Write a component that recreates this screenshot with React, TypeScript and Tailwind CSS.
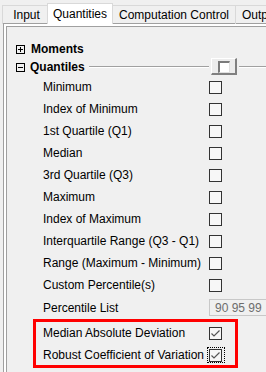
import React from "react";

const items = [
  "Minimum",
  "Index of Minimum",
  "1st Quartile (Q1)",
  "Median",
  "3rd Quartile (Q3)",
  "Maximum",
  "Index of Maximum",
  "Interquartile Range (Q3 - Q1)",
  "Range (Maximum - Minimum)",
  "Custom Percentile(s)",
];

const CheckBox = ({ checked = false }: { checked?: boolean }) => (
  <span className="block shrink-0 w-[13px] h-[13px] border border-[#333] bg-[#f7f7f7]">
    {checked && (
      <svg viewBox="0 0 11 11" className="w-[11px] h-[11px]">
        <polyline
          points="1.5,5.5 4,8 9.5,2.5"
          fill="none"
          stroke="#555"
          strokeWidth="1.2"
        />
      </svg>
    )}
  </span>
);

const Row = ({ label, children }: { label: string; children: React.ReactNode }) => (
  <div className="flex items-center h-[22px]">
    <span className="w-[166px] shrink-0 whitespace-nowrap">{label}</span>
    {children}
  </div>
);

const App = () => {
  return (
    <div className="w-[266px] h-[372px] bg-[#f0f0f0] overflow-hidden text-[12px] text-black font-['Liberation_Sans',Arial,sans-serif]">
      {/* tab strip */}
      <div className="flex items-end h-[24px] whitespace-nowrap">
        <div className="shrink-0 ml-[2px] w-[45px] h-[19px] flex items-center justify-center border-t border-l border-[#d9d9d9] pl-[3px]">
          Input
        </div>
        <div className="shrink-0 relative z-10 w-[66px] h-[21px] flex items-center justify-center bg-white border-t border-l border-r border-[#d9d9d9]">
          Quantities
        </div>
        <div className="shrink-0 w-[123px] h-[19px] flex items-center justify-center border-t border-r border-[#d9d9d9]">
          Computation Control
        </div>
        <div className="shrink-0 w-[60px] h-[19px] flex items-center pl-[6px] border-t border-[#d9d9d9]">
          Output
        </div>
      </div>

      {/* panel */}
      <div className="-mt-px ml-[3px] border-l border-t border-[#a0a0a0]">
        <div className="border-l-2 border-t-2 border-white">
          <div className="border-l border-t border-[#a0a0a0] pt-[13px] h-[400px]">
            {/* Moments */}
            <div className="flex items-center h-[18px]">
              <span className="ml-[9px] w-[9px] h-[9px] border border-black relative flex items-center justify-center">
                <span className="absolute w-[5px] h-px bg-black" />
                <span className="absolute w-px h-[5px] bg-black" />
              </span>
              <span className="ml-[6px] font-bold">Moments</span>
            </div>

            {/* Quantiles */}
            <div className="flex items-center h-[18px]">
              <span className="ml-[9px] w-[9px] h-[9px] border border-black flex items-center justify-center">
                <span className="w-[5px] h-px bg-black" />
              </span>
              <span className="ml-[5px] font-bold">Quantiles</span>
              <span className="ml-[4px] flex-1 h-[2px] border-t border-[#a0a0a0] border-b border-b-white" />
              <span className="shrink-0 -mt-[2px] mx-[2px] w-[26px] h-[17px] bg-[#ececec] border-t border-l border-white border-r-2 border-b-2 border-r-[#808080] border-b-[#808080] pl-[6px] pt-[2px]">
                <span className="block w-[12px] h-[12px] border-t-2 border-l-2 border-[#7a7a7a] border-r border-b border-r-[#e0e0e0] border-b-[#e0e0e0] bg-white" />
              </span>
              <span className="shrink-0 w-[27px] h-[2px] border-t border-[#a0a0a0] border-b border-b-white" />
            </div>

            {/* items */}
            <div className="pl-[36px]">
              {items.map((label) => (
                <Row key={label} label={label}>
                  <CheckBox />
                </Row>
              ))}
              <div className="flex items-center h-[23px]">
                <span className="w-[166px] shrink-0">Percentile List</span>
                <span className="shrink-0 w-[70px] h-[17px] border border-[#c8c8c8] bg-[#f0f0f0] text-[#6d6d6d] pl-[5px] flex items-center">
                  90 95 99
                </span>
              </div>
            </div>

            {/* highlighted */}
            <div className="ml-[26px] w-[205px] h-[49px] border-[3px] border-[#f00] pl-[7px]">
              <Row label="Median Absolute Deviation">
                <CheckBox checked />
              </Row>
              <Row label="Robust Coefficient of Variation">
                <span className="shrink-0 -ml-[2px] border border-dotted border-black pt-px pl-px pr-[2px]">
                  <CheckBox checked />
                </span>
              </Row>
            </div>

            <div className="pl-[36px] flex items-center h-[22px]">
              <span className="w-[166px] shrink-0"></span>
              <CheckBox />
            </div>
          </div>
        </div>
      </div>
    </div>
  );
};

export default App;
